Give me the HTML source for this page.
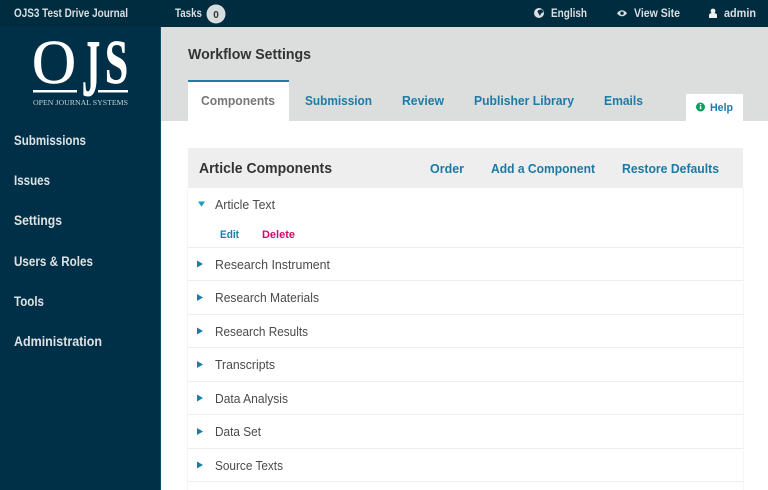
<!DOCTYPE html>
<html lang="en">
<head>
<meta charset="utf-8">
<title>Workflow Settings</title>
<style>
html,body{margin:0;padding:0;width:768px;height:490px;overflow:hidden;background:#fff}
svg{display:block;filter:blur(.35px)}
text{font-family:"Liberation Sans",Arial,sans-serif}
.b{font-weight:700}
.top{font-size:11.5px;fill:#d9dfe2;font-weight:700}
.nav{font-size:13.5px;fill:#dde2e5;font-weight:700}
.tab{font-size:13px;fill:#1e7ba6;font-weight:700}
.act{font-size:13px;fill:#1b7aa5;font-weight:700}
.row{font-size:13px;fill:#4a4a4a}
.sep{stroke:#eee;stroke-width:1}
.tri{fill:#1e7ba6}
.logo{font-family:"Liberation Serif",serif;font-size:62px;fill:#fff;stroke:#fff;stroke-width:.7}
</style>
</head>
<body>
<svg width="768" height="490" viewBox="0 0 768 490" xmlns="http://www.w3.org/2000/svg">
<rect width="768" height="490" fill="#fff"/>
<rect x="161" y="27" width="607" height="94" fill="#dcdddd"/>
<rect width="768" height="27" fill="#002c40"/>
<rect y="27" width="161" height="463" fill="#003047"/>
<rect x="160" y="27" width="1" height="463" fill="#0e4d68"/>

<text class="top" x="14" y="17" textLength="114" lengthAdjust="spacingAndGlyphs">OJS3 Test Drive Journal</text>
<text class="top" x="175" y="17" textLength="27" lengthAdjust="spacingAndGlyphs">Tasks</text>
<circle cx="216" cy="14" r="9.500" fill="#d7dcdf"/>
<text x="216" y="18" text-anchor="middle" font-size="10" class="b" fill="#333">0</text>

<circle cx="539" cy="13" r="5" fill="#d9dfe2"/>
<path d="M538.500 10l3.500-.5 1.500 2.500-2.500 1.500-1 2.500-1.500-2.500-1-2z" fill="#002c40"/>
<text class="top" x="551" y="17" textLength="36" lengthAdjust="spacingAndGlyphs">English</text>
<path d="M617 13.200c2.800-4 7.200-4 10 0-2.800 4-7.200 4-10 0z" fill="#d9dfe2"/>
<circle cx="622" cy="13.200" r="1.700" fill="#002c40"/>
<text class="top" x="634" y="17" textLength="46" lengthAdjust="spacingAndGlyphs">View Site</text>
<circle cx="713" cy="11" r="2.400" fill="#eef1f2"/>
<path d="M709 18v-2.800c0-1.500 1.400-2.200 4-2.200s4 .7 4 2.200v2.800z" fill="#eef1f2"/>
<text class="top" x="724" y="17" textLength="32" lengthAdjust="spacingAndGlyphs">admin</text>

<text class="logo" x="32" y="83" textLength="44" lengthAdjust="spacingAndGlyphs">O</text>
<text class="logo" font-weight="700" transform="translate(82 95) scale(1 1.300)" x="0" y="0" textLength="18" lengthAdjust="spacingAndGlyphs">J</text>
<text class="logo" font-weight="700" x="105" y="83" textLength="23" lengthAdjust="spacingAndGlyphs">S</text>
<rect x="33" y="90" width="44" height="2.500" fill="#fff"/>
<rect x="98" y="90" width="30" height="2.500" fill="#fff"/>
<text x="33" y="105" font-size="7" textLength="95" lengthAdjust="spacingAndGlyphs" fill="#c9d3d8" style="font-family:'Liberation Serif',serif">OPEN JOURNAL SYSTEMS</text>

<text class="nav" x="14" y="145" textLength="72" lengthAdjust="spacingAndGlyphs">Submissions</text>
<text class="nav" x="14" y="185" textLength="36" lengthAdjust="spacingAndGlyphs">Issues</text>
<text class="nav" x="14" y="225" textLength="48" lengthAdjust="spacingAndGlyphs">Settings</text>
<text class="nav" x="14" y="266" textLength="79" lengthAdjust="spacingAndGlyphs">Users &amp; Roles</text>
<text class="nav" x="14" y="306" textLength="30" lengthAdjust="spacingAndGlyphs">Tools</text>
<text class="nav" x="14" y="346" textLength="88" lengthAdjust="spacingAndGlyphs">Administration</text>

<text x="188" y="59" font-size="14.500" class="b" fill="#333" textLength="123" lengthAdjust="spacingAndGlyphs">Workflow Settings</text>

<rect x="188" y="81" width="101" height="40" fill="#fff"/>
<rect x="188" y="80" width="101" height="2" fill="#1e7ba6"/>
<text x="201" y="105" font-size="13" class="b" fill="#777" textLength="74" lengthAdjust="spacingAndGlyphs">Components</text>
<text class="tab" x="305" y="105" textLength="67" lengthAdjust="spacingAndGlyphs">Submission</text>
<text class="tab" x="402" y="105" textLength="42" lengthAdjust="spacingAndGlyphs">Review</text>
<text class="tab" x="474" y="105" textLength="100" lengthAdjust="spacingAndGlyphs">Publisher Library</text>
<text class="tab" x="604" y="105" textLength="39" lengthAdjust="spacingAndGlyphs">Emails</text>

<rect x="686" y="94" width="57" height="27" fill="#fff"/>
<circle cx="700.500" cy="107" r="4.500" fill="#00a25e"/>
<rect x="699.800" y="106" width="1.500" height="3.200" fill="#fff"/>
<rect x="699.800" y="104" width="1.500" height="1.300" fill="#fff"/>
<text x="710" y="111" font-size="11" class="b" fill="#1e7ba6" textLength="23" lengthAdjust="spacingAndGlyphs">Help</text>

<rect x="188" y="148" width="555" height="40" fill="#eee"/>
<text x="199" y="173" font-size="14.500" class="b" fill="#333" textLength="133" lengthAdjust="spacingAndGlyphs">Article Components</text>
<text class="act" x="430" y="173" textLength="34" lengthAdjust="spacingAndGlyphs">Order</text>
<text class="act" x="491" y="173" textLength="104" lengthAdjust="spacingAndGlyphs">Add a Component</text>
<text class="act" x="622" y="173" textLength="97" lengthAdjust="spacingAndGlyphs">Restore Defaults</text>

<path d="M198 201.500h7l-3.500 5.200z" fill="#1e9bc4"/>
<text class="row" x="215" y="209" textLength="60" lengthAdjust="spacingAndGlyphs">Article Text</text>
<text x="220" y="238" font-size="11" class="b" fill="#1e7ba6" textLength="19" lengthAdjust="spacingAndGlyphs">Edit</text>
<text x="262" y="238" font-size="11" class="b" fill="#d00a6c" textLength="33" lengthAdjust="spacingAndGlyphs">Delete</text>

<path class="sep" d="M188 247.500H743M188 280.500H743M188 314.500H743M188 347.500H743M188 381.500H743M188 414.500H743M188 448.500H743M188 481.500H743"/>
<path class="sep" d="M187.500 188V490M743.500 188V490" stroke-opacity=".6"/>

<path class="tri" d="M197 260.500l6 3.500-6 3.500z"/>
<text class="row" x="215" y="269" textLength="115" lengthAdjust="spacingAndGlyphs">Research Instrument</text>
<path class="tri" d="M197 294l6 3.500-6 3.500z"/>
<text class="row" x="215" y="302" textLength="104" lengthAdjust="spacingAndGlyphs">Research Materials</text>
<path class="tri" d="M197 327.500l6 3.500-6 3.500z"/>
<text class="row" x="215" y="336" textLength="93" lengthAdjust="spacingAndGlyphs">Research Results</text>
<path class="tri" d="M197 361l6 3.500-6 3.500z"/>
<text class="row" x="215" y="369" textLength="60" lengthAdjust="spacingAndGlyphs">Transcripts</text>
<path class="tri" d="M197 394.500l6 3.500-6 3.500z"/>
<text class="row" x="215" y="403" textLength="73" lengthAdjust="spacingAndGlyphs">Data Analysis</text>
<path class="tri" d="M197 428l6 3.500-6 3.500z"/>
<text class="row" x="215" y="436" textLength="46" lengthAdjust="spacingAndGlyphs">Data Set</text>
<path class="tri" d="M197 461.500l6 3.500-6 3.500z"/>
<text class="row" x="215" y="470" textLength="68" lengthAdjust="spacingAndGlyphs">Source Texts</text>
</svg>
</body>
</html>
